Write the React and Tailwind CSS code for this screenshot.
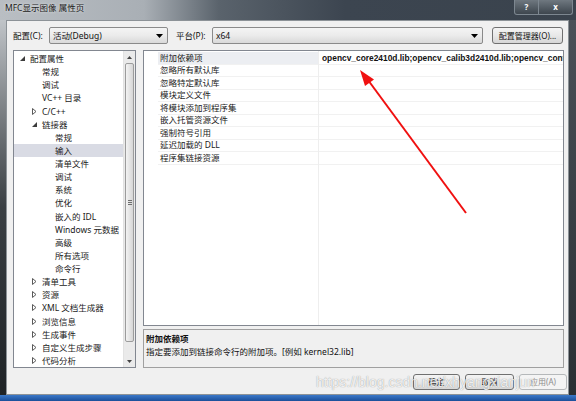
import React from 'react';

const FONT = "font-['Noto_Sans','Noto_Sans_CJK_SC',sans-serif]";

const tree = [
  { label: '配置属性', level: 0, icon: 'open' },
  { label: '常规', level: 1 },
  { label: '调试', level: 1 },
  { label: 'VC++ 目录', level: 1 },
  { label: 'C/C++', level: 1, icon: 'closed' },
  { label: '链接器', level: 1, icon: 'open' },
  { label: '常规', level: 2 },
  { label: '输入', level: 2, selected: true },
  { label: '清单文件', level: 2 },
  { label: '调试', level: 2 },
  { label: '系统', level: 2 },
  { label: '优化', level: 2 },
  { label: '嵌入的 IDL', level: 2 },
  { label: 'Windows 元数据', level: 2 },
  { label: '高级', level: 2 },
  { label: '所有选项', level: 2 },
  { label: '命令行', level: 2 },
  { label: '清单工具', level: 1, icon: 'closed' },
  { label: '资源', level: 1, icon: 'closed' },
  { label: 'XML 文档生成器', level: 1, icon: 'closed' },
  { label: '浏览信息', level: 1, icon: 'closed' },
  { label: '生成事件', level: 1, icon: 'closed' },
  { label: '自定义生成步骤', level: 1, icon: 'closed' },
  { label: '代码分析', level: 1, icon: 'closed' },
];

const indent = ['pl-[6px]', 'pl-[18px]', 'pl-[31px]'];

const props = [
  '附加依赖项',
  '忽略所有默认库',
  '忽略特定默认库',
  '模块定义文件',
  '将模块添加到程序集',
  '嵌入托管资源文件',
  '强制符号引用',
  '延迟加载的 DLL',
  '程序集链接资源',
];

const Arrow = () => (
  <svg width="7" height="4" viewBox="0 0 7 4" className="shrink-0">
    <path d="M0 0H7L3.5 4Z" fill="#000" />
  </svg>
);

const Combo = ({ value, className }) => (
  <div
    className={`h-[17px] shrink-0 flex items-center border border-[#8a8a8a] rounded-[2px] bg-linear-to-b from-[#f4f4f4] via-[#ebebeb] to-[#d9d9d9] pr-[4px] ${className}`}
  >
    <span className="flex-1 pl-[3px] text-[8.5px] leading-[15px] text-[#111]">{value}</span>
    <Arrow />
  </div>
);

const Btn = ({ children, disabled, className }) => (
  <div
    className={`h-[16px] shrink-0 flex items-center justify-center rounded-[3px] border text-[8px] leading-[14px] ${
      disabled
        ? 'border-[#b5b8ba] bg-[#f4f4f4] text-[#8d8d8d]'
        : 'border-[#707070] bg-linear-to-b from-[#f4f4f4] via-[#e8e8e8] to-[#d6d6d6] text-[#111]'
    } ${className}`}
  >
    {children}
  </div>
);

const TreeIcon = ({ type }) => {
  if (type === 'open')
    return (
      <svg width="5" height="5" viewBox="0 0 5 5">
        <path d="M5 0V5H0Z" fill="#3c3c3c" />
      </svg>
    );
  if (type === 'closed')
    return (
      <svg width="5" height="7" viewBox="0 0 5 7">
        <path d="M0.5 0.5L4 3.5L0.5 6.5Z" fill="#fff" stroke="#5a5a5a" strokeWidth="1" />
      </svg>
    );
  return null;
};

const Tree = () => (
  <div className="w-[123px] shrink-0 h-full border border-[#828790] bg-white flex">
    <div className="flex-1 min-w-0 pt-[1px] overflow-hidden">
      {tree.map((t, i) => (
        <div
          key={i}
          className={`h-[13.13px] flex items-center ${indent[t.level]} ${t.selected ? 'bg-[#d9dbe4]' : ''}`}
        >
          <span className="w-[10px] shrink-0 flex items-center">
            <TreeIcon type={t.icon} />
          </span>
          <span className="text-[8.5px] leading-[13px] text-[#1a1a1a] whitespace-nowrap">{t.label}</span>
        </div>
      ))}
    </div>
    {/* scrollbar */}
    <div className="w-[12px] shrink-0 bg-[#eaeaea] border-l border-[#e2e2e2] flex flex-col">
      <div className="h-[12px] flex items-center justify-center">
        <svg width="5" height="3" viewBox="0 0 5 3">
          <path d="M0 3L2.5 0L5 3Z" fill="#444" />
        </svg>
      </div>
      <div className="h-[279px] mx-[1px] rounded-[2px] border border-[#9c9c9c] bg-linear-to-r from-[#f3f3f3] to-[#d6d6d6] flex items-center justify-center">
        <div className="flex flex-col gap-[1px]">
          <div className="w-[4px] h-px bg-[#6e6e6e]" />
          <div className="w-[4px] h-px bg-[#6e6e6e]" />
          <div className="w-[4px] h-px bg-[#6e6e6e]" />
        </div>
      </div>
      <div className="flex-1" />
      <div className="h-[12px] flex items-center justify-center">
        <svg width="5" height="3" viewBox="0 0 5 3">
          <path d="M0 0H5L2.5 3Z" fill="#444" />
        </svg>
      </div>
    </div>
  </div>
);

const Grid = () => (
  <div className="h-[276px] border border-[#828790] bg-white flex overflow-hidden">
    <div className="w-[14px] shrink-0 bg-white" />
    <div className="w-[161px] shrink-0 pt-[1px] border-r border-[#eeeeee]">
      {props.map((p, i) => (
        <div
          key={i}
          className={`h-[12.5px] flex items-center pl-[2px] border-b border-[#f1f1f1] ${i === 0 ? 'bg-[#eceef2]' : ''}`}
        >
          <span className="text-[8.5px] leading-[12px] text-[#1a1a1a] whitespace-nowrap">{p}</span>
        </div>
      ))}
    </div>
    <div className="flex-1 min-w-0 w-0 pt-[1px] overflow-hidden">
      {props.map((p, i) => (
        <div key={i} className="h-[12.5px] flex items-center pl-[3px] border-b border-[#f1f1f1]">
          {i === 0 && (
            <span className="font-['Liberation_Sans',sans-serif] font-bold text-[8.4px] leading-[12px] text-[#111] whitespace-nowrap">
              opencv_core2410d.lib;opencv_calib3d2410d.lib;opencv_contrib2410d.lib
            </span>
          )}
        </div>
      ))}
    </div>
  </div>
);

export default function App() {
  return (
    <div className={`relative w-[576px] h-[401px] flex flex-col overflow-hidden bg-[#2f3438] ${FONT}`}>
      {/* title bar */}
      <div className="h-[20px] shrink-0 flex items-start bg-[linear-gradient(to_right,#b9bec3_0%,#a9afb5_25%,#5a636c_38%,#3c4550_60%,#3a434d_100%)]">
        <span className="pl-[5px] pt-[2px] text-[8.5px] leading-[12px] text-[#202020] [text-shadow:0_0_3px_rgba(255,255,255,0.8)]">
          MFC显示图像 属性页
        </span>
        <div className="flex-1" />
        <div className="flex mr-[3px]">
          <div className="w-[25px] h-[15px] flex items-center justify-center border border-[#7d8790] border-t-0 rounded-bl-[3px] bg-linear-to-b from-[#6f7880] to-[#3e464e] text-white text-[8px] font-bold">
            ?
          </div>
          <div className="w-[34px] h-[15px] flex items-center justify-center border border-[#7d8790] border-t-0 border-l-0 rounded-br-[3px] bg-linear-to-b from-[#6f7880] to-[#3e464e] text-white text-[8px] font-bold">
            x
          </div>
        </div>
      </div>

      <div className="flex-1 min-h-0 flex">
        <div className="w-[6px] shrink-0 bg-linear-to-b from-[#c0c4c8] via-[#3a3f43] to-[#1f2326]" />

        {/* client */}
        <div className="flex-1 min-w-0 flex flex-col bg-[#f0f0f0] border border-[#8c9297] pl-[6px] pr-[4px]">
          <div className="mt-[6px] h-[17px] flex items-center">
            <span className="w-[36px] shrink-0 text-[8.5px] leading-[12px] text-[#111]">配置(C):</span>
            <Combo value="活动(Debug)" className="w-[119px]" />
            <span className="ml-[8px] w-[36px] shrink-0 text-[8.5px] leading-[12px] text-[#111]">平台(P):</span>
            <Combo value="x64" className="w-[271px]" />
            <Btn className="ml-[9px] w-[71px] h-[17px]">配置管理器(O)...</Btn>
          </div>

          <div className="mt-[6px] h-[318px] flex gap-[7px]">
            <Tree />
            <div className="flex-1 min-w-0 flex flex-col gap-[3px]">
              <Grid />
              <div className="flex-1 border border-[#a0a0a0] bg-[#f0f0f0] pl-[2px] pt-[2px]">
                <div className="text-[8.5px] leading-[13px] font-bold text-[#111]">附加依赖项</div>
                <div className="text-[8.5px] leading-[13px] text-[#111]">
                  指定要添加到链接命令行的附加项。[例如 kernel32.lib]
                </div>
              </div>
            </div>
          </div>

          <div className="mt-[6px] flex justify-end gap-[5px] -mr-[3px]">
            <Btn className="w-[47px]">确定</Btn>
            <Btn className="w-[49px]">取消</Btn>
            <Btn disabled className="w-[48px]">应用(A)</Btn>
          </div>
        </div>

        <div className="w-[7px] shrink-0 bg-linear-to-b from-[#4a5158] to-[#2a2f33]" />
      </div>

      <div className="h-[6px] shrink-0 bg-linear-to-b from-[#3b78c8] to-[#1b4f9a]" />

      {/* watermark */}
      <div className="absolute left-[316px] top-[373px] font-['Liberation_Sans',sans-serif] text-[14px] leading-[18px] text-white/85 [text-shadow:0_0_1px_rgba(0,0,0,0.45)] whitespace-nowrap pointer-events-none">
        https://blog.csdn.net/xhyangxianjun
      </div>

      {/* red annotation arrow */}
      <svg className="absolute left-0 top-0 pointer-events-none" width="576" height="401">
        <line x1="466" y1="213" x2="368" y2="80" stroke="#f01010" strokeWidth="2" />
        <polygon points="360,70 374,79.5 365,86" fill="#f01010" />
      </svg>
    </div>
  );
}
